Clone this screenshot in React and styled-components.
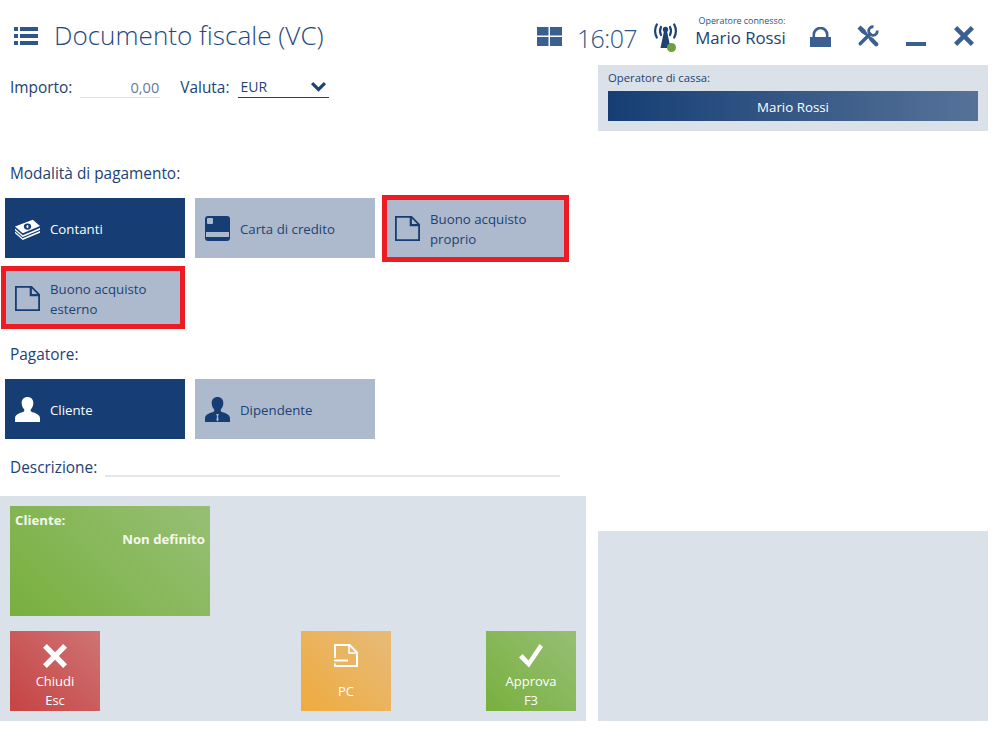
import React from 'react';
import styled, { createGlobalStyle } from 'styled-components';

const GlobalStyle = createGlobalStyle`
  html, body {
    margin: 0;
    padding: 0;
    background: #fff;
    font-family: 'Open Sans', 'Noto Sans', sans-serif;
    color: #1d4274;
  }
`;

const Page = styled.div`
  width: 988px;
  height: 721px;
  display: flex;
  flex-direction: column;
`;
const Header = styled.header`
  height: 65px;
  flex: none;
  display: flex;
  align-items: center;
  color: #3b5f90;
`;
const MenuButton = styled.div`
  width: 24px;
  height: 18px;
  margin: 6px 16px 0 14px;
`;
const Title = styled.h1`
  margin: 4px 0 0;
  font-size: 26.1px;
  font-weight: 300;
  color: #1f4a84;
  flex: 1;
`;
const HeaderIcon = styled.div`
  display: flex;
  margin: ${({ $m }) => $m || 0};
`;
const Clock = styled.div`
  font-size: 25px;
  font-weight: 300;
  letter-spacing: -0.6px;
  margin: 10px 17px 0 15px;
  color: #2f5589;
`;
const Operator = styled.div`
  width: 92px;
  margin: 5px 0 0 18px;
  display: flex;
  flex-direction: column;
  align-items: center;
`;
const OperatorLabel = styled.span`
  font-size: 8.9px;
  line-height: 11px;
  margin-top: -6px;
  color: #2a5288;
  white-space: nowrap;
`;
const OperatorName = styled.span`
  font-size: 16.8px;
  line-height: 24px;
  margin-right: 3px;
  color: #1d4274;
  white-space: nowrap;
`;
const Body = styled.div`
  flex: 1;
  display: grid;
  grid-template-columns: 586px 390px;
  column-gap: 12px;
`;
const Left = styled.main`
  display: flex;
  flex-direction: column;
`;
const Form = styled.div`
  flex: 1;
`;
const AmountRow = styled.div`
  display: flex;
  align-items: flex-end;
  height: 33px;
  padding-left: 10px;
`;
const Label = styled.span`
  display: block;
  font-size: 15.4px;
  line-height: 20px;
  color: #1d4274;
`;
const AmountInput = styled.div`
  width: 80px;
  margin: 0 20px 0 8px;
  border-bottom: 1px solid #dedfe0;
  font-size: 14.6px;
  line-height: 20px;
  text-align: right;
  color: #69789a;
  box-sizing: border-box;
  padding-right: 1px;
`;
const CurrencySelect = styled.div`
  width: 91px;
  margin-left: 9px;
  border-bottom: 1px solid #1d4274;
  font-size: 14px;
  line-height: 20px;
  display: flex;
  justify-content: space-between;
  align-items: center;
  padding: 0 3px 0 2px;
  box-sizing: border-box;
`;
const SectionLabel = styled(Label)`
  padding-left: 10px;
  margin: ${({ $m }) => $m};
`;
const ButtonGrid = styled.div`
  display: flex;
  flex-wrap: wrap;
  gap: 10px;
  padding-left: 5px;
  width: 570px;
  box-sizing: border-box;
`;
const PayButton = styled.div`
  position: relative;
  width: 180px;
  height: 60px;
  display: flex;
  align-items: center;
  gap: 10px;
  padding-left: 10px;
  box-sizing: border-box;
  background: ${({ $active }) => ($active ? '#163e74' : '#adbacd')};
  color: ${({ $active }) => ($active ? '#fff' : '#1d4274')};
  font-size: 13.25px;
  line-height: 20px;
`;
const ButtonText = styled.span`
  margin-top: 1px;
`;
const RedFrame = styled.div`
  position: absolute;
  top: ${({ $t }) => $t}px;
  right: ${({ $r }) => $r}px;
  bottom: ${({ $b }) => $b}px;
  left: ${({ $l }) => $l}px;
  border: 5px solid #ed1c24;
`;
const IconSlot = styled.div`
  width: 25px;
  height: 25px;
  flex: none;
  display: flex;
`;
const DescriptionRow = styled.div`
  display: flex;
  align-items: flex-end;
  margin-top: 19px;
  padding-left: 10px;
`;
const DescriptionLine = styled.div`
  width: 455px;
  margin: 0 0 1px 8px;
  border-bottom: 2px solid #e4e5e6;
`;
const ActionPanel = styled.section`
  height: 225px;
  flex: none;
  background: #dbe1e9;
  padding: 10px;
  box-sizing: border-box;
  display: flex;
  flex-direction: column;
  justify-content: space-between;
`;
const CustomerTile = styled.div`
  width: 200px;
  height: 110px;
  box-sizing: border-box;
  padding: 5px;
  background: linear-gradient(45deg, #78b03e 0%, #97bf75 100%);
  color: #f4f8ef;
  font-size: 13.2px;
  font-weight: 700;
  line-height: 19px;
`;
const CustomerValue = styled.div`
  text-align: right;
`;
const ActionRow = styled.div`
  display: flex;
`;
const ActionButton = styled.div`
  width: 90px;
  height: 80px;
  margin-left: ${({ $ml }) => $ml || 0}px;
  display: flex;
  flex-direction: column;
  align-items: center;
  box-sizing: border-box;
  padding-top: 13px;
  color: #fff;
  font-size: 13px;
  line-height: 19px;
  text-align: center;
  background: ${({ $kind }) =>
    ({
      red: 'linear-gradient(45deg, #c64343 0%, #cf7474 100%)',
      orange: 'linear-gradient(45deg, #efab3f 0%, #e6bb79 100%)',
      green: 'linear-gradient(45deg, #78b03e 0%, #97bf75 100%)',
    })[$kind]};
`;
const ActionIcon = styled.div`
  height: 26px;
  display: flex;
  margin-bottom: ${({ $mb }) => $mb || 0}px;
`;
const Right = styled.aside`
  display: flex;
  flex-direction: column;
  justify-content: space-between;
`;
const CashierPanel = styled.div`
  height: 66px;
  background: #dbe1e9;
  padding: 5px 10px 0;
  box-sizing: border-box;
`;
const CashierLabel = styled.div`
  font-size: 11.3px;
  line-height: 16px;
  color: #1d4274;
  margin-bottom: 5px;
`;
const CashierBar = styled.div`
  height: 30px;
  background: linear-gradient(90deg, #163e74 0%, #567298 100%);
  color: #fff;
  font-size: 13.3px;
  line-height: 32px;
  text-align: center;
`;
const SummaryPanel = styled.div`
  height: 190px;
  background: #dbe1e9;
`;

const MenuIcon = () => (
  <svg width="24" height="18" viewBox="0 0 24 18" fill="#2f5589">
    <rect x="0" y="0" width="4" height="4" />
    <rect x="6" y="0" width="18" height="4" />
    <rect x="0" y="7" width="4" height="4" />
    <rect x="6" y="7" width="18" height="4" />
    <rect x="0" y="14" width="4" height="4" />
    <rect x="6" y="14" width="18" height="4" />
  </svg>
);
const TilesIcon = () => (
  <svg width="25" height="19" viewBox="0 0 25 19" fill="#3b5f90">
    <rect x="0" y="0" width="11.5" height="8.5" />
    <rect x="13" y="0" width="12" height="8.5" />
    <rect x="0" y="10" width="11.5" height="9" />
    <rect x="13" y="10" width="12" height="9" />
  </svg>
);
const AntennaIcon = () => (
  <svg width="24" height="29" viewBox="0 0 24 29">
    <g fill="none" stroke="#1d4274" strokeWidth="2.2" strokeLinecap="round">
      <path d="M2.800 1.500 Q-.6 8 2.800 14.500" />
      <path d="M7 4 Q5 8 7 12" />
      <path d="M20.200 1.500 Q23.600 8 20.200 14.500" />
      <path d="M16 4 Q18 8 16 12" />
    </g>
    <circle cx="11.500" cy="6.500" r="2.700" fill="#1d4274" />
    <path d="M10 8h3l3.500 17h-10z" fill="#1d4274" />
    <circle cx="17.500" cy="24.500" r="4.500" fill="#6d9f3c" />
  </svg>
);
const LockIcon = () => (
  <svg width="21" height="20" viewBox="0 0 21 20">
    <path d="M3.800 11V7.700a6.700 6.700 0 0 1 13.400 0V11" fill="none" stroke="#3b5f90" strokeWidth="2.600" />
    <path d="M0 10h21v10H0z" fill="#3b5f90" />
  </svg>
);
const ToolsIcon = () => (
  <svg width="22" height="22" viewBox="0 0 22 22" fill="#3b5f90" stroke="#3b5f90">
    <path d="M.5 3.500 3.500.5 8 4.500 10 8 8 10 4.500 8z" stroke="none" />
    <path d="M8 8 15 15" strokeWidth="2.600" />
    <path d="M14.500 14.500 19.200 19.200" strokeWidth="4.200" strokeLinecap="round" />
    <path d="M3.200 18.800 13 9" strokeWidth="3.400" strokeLinecap="round" />
    <path d="M16.500 1.800A4.300 4.300 0 1 0 20.200 5.500" fill="none" strokeWidth="2.800" />
  </svg>
);
const CloseIcon = ({ size = 20, color = '#3b5f90' }) => (
  <svg width={size} height={size} viewBox="0 0 20 20" fill={color}>
    <path d="M3.200 0 10 6.800 16.800 0 20 3.200 13.200 10 20 16.800 16.800 20 10 13.200 3.200 20 0 16.800 6.800 10 0 3.200z" />
  </svg>
);
const MinimizeIcon = () => (
  <svg width="20" height="4" viewBox="0 0 20 4" fill="#3b5f90">
    <rect width="20" height="4" />
  </svg>
);
const ChevronIcon = () => (
  <svg width="15" height="10" viewBox="0 0 15 10" fill="#1d4274">
    <path d="M0 2.300 2.200 0l5.300 5.300L12.800 0 15 2.300 7.500 9.800z" />
  </svg>
);
const CashIcon = () => (
  <svg width="26" height="25" viewBox="0 0 26 25">
    <g fill="#fff">
      <path d="M0 10.500 18.500 3.500 26 10 8 17.500z" />
      <path d="M0 12.500 8 19.500 26 12v1.800L8 21.300 0 14.300z" />
      <path d="M0 15.700 8 22.700 26 15.200V17L8 24.500 0 17.500z" />
    </g>
    <ellipse cx="13" cy="10.500" rx="3.800" ry="3.200" fill="#163e74" />
    <ellipse cx="13" cy="10.500" rx="1" ry="1.700" fill="#fff" />
  </svg>
);
const CardIcon = () => (
  <svg width="25" height="25" viewBox="0 0 25 25">
    <rect width="25" height="25" rx="3" fill="#163e74" />
    <rect x="1" y="16" width="23" height="5" fill="#adbacd" />
    <rect x="2" y="2" width="6" height="6" rx="1" fill="#adbacd" />
  </svg>
);
const PageIcon = () => (
  <svg width="25" height="25" viewBox="0 0 25 25" fill="none" stroke="#163e74" strokeWidth="1.800">
    <path d="M.9.9h15.600L24.100 8.500V24.100H.9z" />
    <path d="M15.800 1V9.200H24" strokeWidth="2.200" />
  </svg>
);
const PersonIcon = ({ color, tie }) => (
  <svg width="25" height="25" viewBox="0 0 25 25">
    <path
      d="M12.500 0c3.600 0 6.100 2.500 5.800 6.500-.2 2.400-1 4.200-2.200 5.400-.6.700-.6 2.200.4 2.800 2 1 8.500 2.200 8.500 6.300V25H0v-4c0-4.100 6.500-5.300 8.500-6.300 1-.6 1-2.100.4-2.800-1.200-1.200-2-3-2.200-5.400C6.400 2.500 8.900 0 12.500 0z"
      fill={color}
    />
    {tie && <path d="M11 17h3l-1 2 .6 4-1.100 1.500L11.400 23l.6-4z" fill="#adbacd" />}
  </svg>
);
const DraftIcon = () => (
  <svg width="24" height="24" viewBox="0 0 24 24" fill="none" stroke="#fff" strokeWidth="2">
    <path d="M1 14V1h14.500L23 8.500V22H1v-2.500" />
    <path d="M15 1v8h8" strokeWidth="1.600" />
    <path d="M0 16.500h14" />
  </svg>
);
const CheckIcon = () => (
  <svg width="24" height="24" viewBox="0 0 24 24" fill="#fff">
    <path d="M0 13.500 3.500 10l6 6.500L20.500 0 24 3 10 23.500z" />
  </svg>
);

const payments = [
  { id: 'cash', icon: <CashIcon />, text: 'Contanti', active: true },
  { id: 'card', icon: <CardIcon />, text: 'Carta di credito' },
  {
    id: 'own',
    icon: <PageIcon />,
    text: (
      <>
        Buono acquisto
        <br />
        proprio
      </>
    ),
    frame: { t: -3, r: -4, b: -4, l: -3 },
  },
  {
    id: 'ext',
    icon: <PageIcon />,
    text: (
      <>
        Buono acquisto
        <br />
        esterno
      </>
    ),
    frame: { t: -2, r: 0, b: -1, l: -4 },
  },
];

const App = () => (
  <Page>
    <GlobalStyle />
    <Header>
      <MenuButton>
        <MenuIcon />
      </MenuButton>
      <Title>Documento fiscale (VC)</Title>
      <HeaderIcon $m="7px 0 0 0">
        <TilesIcon />
      </HeaderIcon>
      <Clock>16:07</Clock>
      <HeaderIcon $m="10px 0 0 0">
        <AntennaIcon />
      </HeaderIcon>
      <Operator>
        <OperatorLabel>Operatore connesso:</OperatorLabel>
        <OperatorName>Mario Rossi</OperatorName>
      </Operator>
      <HeaderIcon $m="8px 0 0 22px">
        <LockIcon />
      </HeaderIcon>
      <HeaderIcon $m="7px 0 0 26px">
        <ToolsIcon />
      </HeaderIcon>
      <HeaderIcon $m="23px 0 0 27px">
        <MinimizeIcon />
      </HeaderIcon>
      <HeaderIcon $m="7px 14px 0 28px">
        <CloseIcon />
      </HeaderIcon>
    </Header>
    <Body>
      <Left>
        <Form>
          <AmountRow>
            <Label>Importo:</Label>
            <AmountInput>0,00</AmountInput>
            <Label>Valuta:</Label>
            <CurrencySelect>
              EUR
              <ChevronIcon />
            </CurrencySelect>
          </AmountRow>
          <SectionLabel $m="66px 0 14px">Modalità di pagamento:</SectionLabel>
          <ButtonGrid>
            {payments.map((p) => (
              <PayButton key={p.id} $active={p.active}>
                <IconSlot>{p.icon}</IconSlot>
                <ButtonText>{p.text}</ButtonText>
                {p.frame && <RedFrame $t={p.frame.t} $r={p.frame.r} $b={p.frame.b} $l={p.frame.l} />}
              </PayButton>
            ))}
          </ButtonGrid>
          <SectionLabel $m="17px 0 14px">Pagatore:</SectionLabel>
          <ButtonGrid>
            <PayButton $active>
              <IconSlot>
                <PersonIcon color="#fff" />
              </IconSlot>
              <ButtonText>Cliente</ButtonText>
            </PayButton>
            <PayButton>
              <IconSlot>
                <PersonIcon color="#163e74" tie />
              </IconSlot>
              <ButtonText>Dipendente</ButtonText>
            </PayButton>
          </ButtonGrid>
          <DescriptionRow>
            <Label>Descrizione:</Label>
            <DescriptionLine />
          </DescriptionRow>
        </Form>
        <ActionPanel>
          <CustomerTile>
            Cliente:
            <CustomerValue>Non definito</CustomerValue>
          </CustomerTile>
          <ActionRow>
            <ActionButton $kind="red">
              <ActionIcon $mb={2}>
                <CloseIcon size={24} color="#fff" />
              </ActionIcon>
              Chiudi
              <br />
              Esc
            </ActionButton>
            <ActionButton $kind="orange" $ml={201}>
              <ActionIcon $mb={12}>
                <DraftIcon />
              </ActionIcon>
              PC
            </ActionButton>
            <ActionButton $kind="green" $ml={95}>
              <ActionIcon $mb={2}>
                <CheckIcon />
              </ActionIcon>
              Approva
              <br />
              F3
            </ActionButton>
          </ActionRow>
        </ActionPanel>
      </Left>
      <Right>
        <CashierPanel>
          <CashierLabel>Operatore di cassa:</CashierLabel>
          <CashierBar>Mario Rossi</CashierBar>
        </CashierPanel>
        <SummaryPanel />
      </Right>
    </Body>
  </Page>
);

export default App;
